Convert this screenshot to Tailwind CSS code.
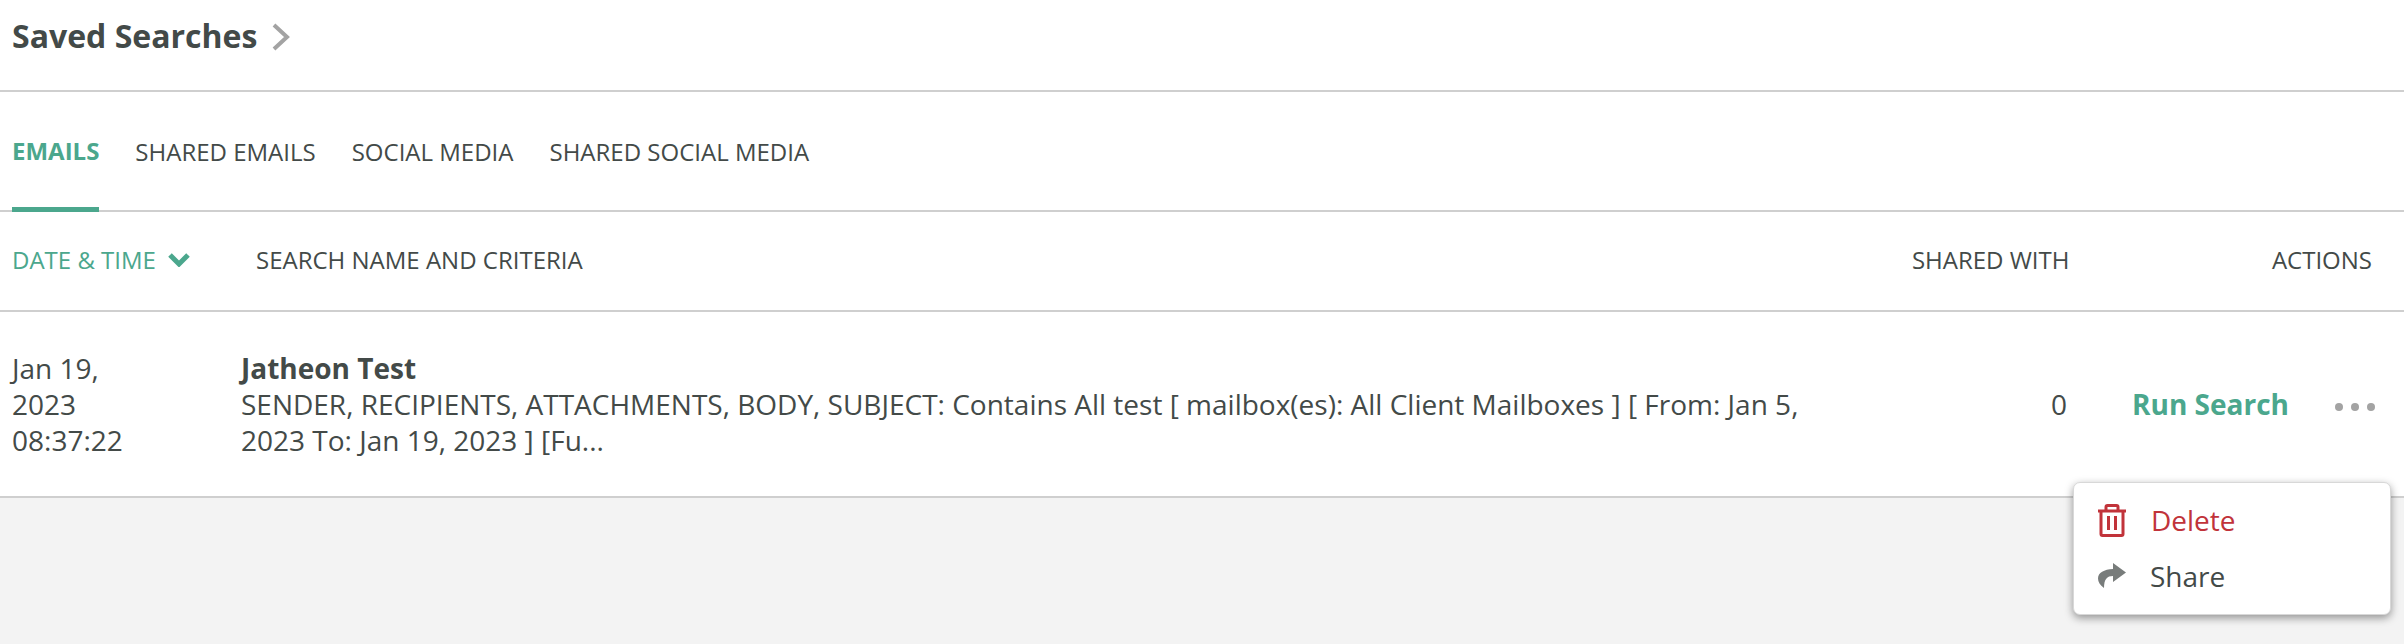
<!DOCTYPE html>
<html lang="en">
<head>
    <meta charset="UTF-8">
    <title>Saved Searches</title>
    <script src="https://cdn.jsdelivr.net/npm/@tailwindcss/browser@4"></script>
</head>
<body class="h-[644px] overflow-hidden bg-[#f3f3f3] font-['Open_Sans',sans-serif] text-[#434a48]">
    <div class="relative">
        <div class="h-[92px] bg-white border-b-2 border-[#cfcfcf] pl-3 flex items-center gap-[14px] pb-[18px]">
            <h1 class="text-[32px] leading-[40px] font-bold">Saved Searches</h1>
            <svg class="w-[20px] h-[28px] mt-[2px]" viewBox="0 0 20 28" fill="none" stroke="#a3a3a3" stroke-width="4"><path d="M3 2l13 12L3 26"/></svg>
        </div>

        <div class="h-[120px] bg-white border-b-2 border-[#cfcfcf] pl-3 flex gap-9 text-[24px]">
            <a class="h-[120px] border-b-[5px] border-[#4ba78d] text-[#4ba78d] font-bold flex items-center pt-[3px]">EMAILS</a>
            <a class="flex items-center pt-[1px]">SHARED EMAILS</a>
            <a class="flex items-center pt-[1px]">SOCIAL MEDIA</a>
            <a class="flex items-center pt-[1px]">SHARED SOCIAL MEDIA</a>
        </div>

        <div class="h-[100px] bg-white border-b-2 border-[#cfcfcf] pl-3 pr-8 pb-[3px] flex items-center text-[24px]">
            <div class="w-[244px] flex items-center gap-3 text-[#4ba78d]">
                <span>DATE &amp; TIME</span>
                <svg class="w-[22px] h-[14px]" viewBox="0 0 22 14" fill="none" stroke="#4ba78d" stroke-width="5"><path d="M2 2l9 9 9-9"/></svg>
            </div>
            <div class="flex-1">SEARCH NAME AND CRITERIA</div>
            <div class="w-[360px]">SHARED WITH</div>
            <div>ACTIONS</div>
        </div>

        <div class="h-[186px] bg-white border-b-2 border-[#cfcfcf] pl-3 flex items-center text-[28px] leading-[36px]">
            <div class="w-[229px] shrink-0">Jan 19,<br>2023<br>08:37:22</div>
            <div class="w-[1600px] shrink-0">
                <div class="font-bold">Jatheon Test</div>
                <div>SENDER, RECIPIENTS, ATTACHMENTS, BODY, SUBJECT: Contains All test [ mailbox(es): All Client Mailboxes ] [ From: Jan 5, 2023 To: Jan 19, 2023 ] [Fu...</div>
            </div>
            <div class="w-[226px] shrink-0 text-right">0</div>
            <div class="ml-[65px] text-[#4ba78d] font-bold">Run Search</div>
            <div class="ml-[46px] flex gap-2 mt-[6px]">
                <span class="w-2 h-2 rounded-full bg-[#a3a3a3]"></span>
                <span class="w-2 h-2 rounded-full bg-[#a3a3a3]"></span>
                <span class="w-2 h-2 rounded-full bg-[#a3a3a3]"></span>
            </div>
        </div>

        <div class="absolute left-[2073px] top-[482px] w-[318px] h-[133px] bg-white rounded-[7px] border border-[#d8d8d8] shadow-[0_3px_8px_rgba(0,0,0,0.4)] pl-6 pt-[9px] text-[28px] leading-[56px]">
            <div class="flex items-center h-[56px] text-[#c1333a] gap-[25px]">
                <svg class="w-[28px] h-[33px]" viewBox="0 0 28 33" fill="none" stroke="#c1333a" stroke-width="3"><path d="M0 7h28M8 6V3q0-1.500 1.500-1.500h9q1.500 0 1.500 1.500v3M3 7v23q0 1.500 1.500 1.500h19q1.500 0 1.500-1.500V7M10.500 12v14M17.500 12v14"/></svg>
                <span>Delete</span>
            </div>
            <div class="flex items-center h-[56px] gap-[24px]">
                <svg class="w-[28px] h-[26px]" viewBox="0 0 28 26" fill="#787c7b"><path d="M15 0l13 9.500L15 19v-6C9 13 6 16 6 25 2 22 0 19 0 15.500 0 9.500 6 6.500 15 6z"/></svg>
                <span>Share</span>
            </div>
        </div>
    </div>
</body>
</html>
